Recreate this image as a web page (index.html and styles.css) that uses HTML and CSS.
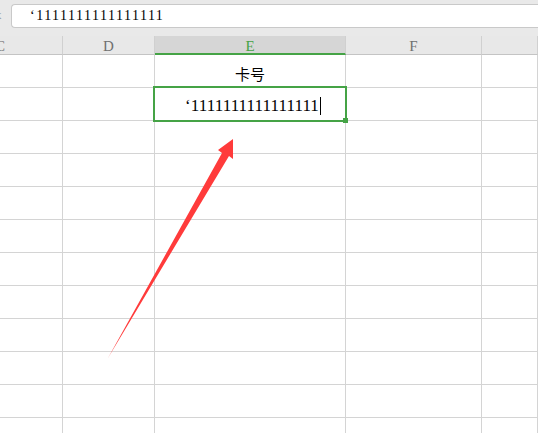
FILE: index.html
```html
<!DOCTYPE html>
<html>
<head>
  <title>卡号</title>
  <meta name="viewport" content="width=device-width, initial-scale=1.0">
  <link rel="stylesheet" href="styles.css">
</head>
<body>
  <!-- formula bar -->
  <div class="topbar">
    <span class="fx">x</span>
    <div class="formula">‘1111111111111111</div>
  </div>

  <!-- column headers + cells -->
  <div class="sheet">
    <div class="kop kop-c">C</div>
    <div class="kop">D</div>
    <div class="kop aktif">E</div>
    <div class="kop">F</div>
    <div class="kop"></div>

    <div class="sel"></div><div class="sel"></div><div class="sel teks">卡号</div><div class="sel"></div><div class="sel"></div>
    <div class="sel"></div><div class="sel"></div><div class="sel teks angka dipilih">‘1111111111111111<span class="kursor"></span></div><div class="sel"></div><div class="sel"></div>
    <div class="sel"></div><div class="sel"></div><div class="sel"></div><div class="sel"></div><div class="sel"></div>
    <div class="sel"></div><div class="sel"></div><div class="sel"></div><div class="sel"></div><div class="sel"></div>
    <div class="sel"></div><div class="sel"></div><div class="sel"></div><div class="sel"></div><div class="sel"></div>
    <div class="sel"></div><div class="sel"></div><div class="sel"></div><div class="sel"></div><div class="sel"></div>
    <div class="sel"></div><div class="sel"></div><div class="sel"></div><div class="sel"></div><div class="sel"></div>
    <div class="sel"></div><div class="sel"></div><div class="sel"></div><div class="sel"></div><div class="sel"></div>
    <div class="sel"></div><div class="sel"></div><div class="sel"></div><div class="sel"></div><div class="sel"></div>
    <div class="sel"></div><div class="sel"></div><div class="sel"></div><div class="sel"></div><div class="sel"></div>
    <div class="sel"></div><div class="sel"></div><div class="sel"></div><div class="sel"></div><div class="sel"></div>
    <div class="sel"></div><div class="sel"></div><div class="sel"></div><div class="sel"></div><div class="sel"></div>
  </div>

  <!-- panah merah -->
  <svg class="panah" width="538" height="433" viewBox="0 0 538 433">
    <polygon points="233,139 218,150 222,153 108,358 229,156 233,159" fill="#ff3b3b"/>
  </svg>
</body>
</html>
```

FILE: styles.css
```css
body {
  margin: 0;
  padding: 0;
  width: 538px;
  height: 433px;
  overflow: hidden;
  background: #fff;
  font-family: 'Liberation Serif', serif;
  position: relative;
}
.topbar {
  height: 36px;
  background: #e9e9e9;
  display: flex;
  align-items: flex-start;
  padding-top: 4px;
  box-sizing: border-box;
}
.fx {
  width: 11px;
  margin-left: -5px;
  margin-top: 3px;
  font-size: 13px;
  color: #9a9a9a;
  font-family: 'Liberation Serif', serif;
}
.formula {
  flex: 1;
  height: 24px;
  box-sizing: border-box;
  margin-left: 5px;
  border: 1px solid #c9c9c9;
  border-right: none;
  border-radius: 4px 0 0 4px;
  background: #fff;
  padding-left: 18px;
  font-size: 14px;
  letter-spacing: 1.5px;
  line-height: 22px;
  color: #000;
}
.sheet {
  display: grid;
  grid-template-columns: 63px 92px 191px 136px 1fr;
  grid-auto-rows: 33px;
  grid-template-rows: 19px;
}
.kop {
  box-sizing: border-box;
  background: #e8e8e8;
  border-right: 1px solid #d0d0d0;
  border-bottom: 1px solid #c4c4c4;
  font-family: 'Liberation Serif', serif;
  font-size: 15px;
  color: #707070;
  text-align: center;
  line-height: 20px;
}
.kop-c {
  text-align: left;
  text-indent: -5px;
}
.kop.aktif {
  background: #d6d6d6;
  border-bottom: 2px solid #45a346;
  color: #45a346;
}
.sel {
  box-sizing: border-box;
  border-right: 1px solid #d4d4d4;
  border-bottom: 1px solid #d4d4d4;
}
.teks {
  display: flex;
  align-items: center;
  justify-content: center;
  padding-top: 4px;
  font-family: 'Noto Sans CJK SC', sans-serif;
  font-size: 15px;
  color: #000;
}
.angka {
  font-family: 'Liberation Serif', serif;
  font-size: 17px;
  letter-spacing: 0.1px;
  padding-top: 3px;
  padding-left: 6px;
}
.kursor {
  display: inline-block;
  width: 1px;
  height: 18px;
  background: #000;
  margin-left: 1px;
}
.dipilih {
  position: relative;
}
.dipilih::after {
  content: "";
  position: absolute;
  top: -2px;
  left: -2px;
  right: -2px;
  bottom: -2px;
  border: 2px solid #45a346;
  z-index: 1;
}
.dipilih::before {
  content: "";
  position: absolute;
  right: -3px;
  bottom: -3px;
  width: 5px;
  height: 5px;
  background: #45a346;
  z-index: 2;
}
.panah {
  position: absolute;
  top: 0;
  left: 0;
  pointer-events: none;
}
```
